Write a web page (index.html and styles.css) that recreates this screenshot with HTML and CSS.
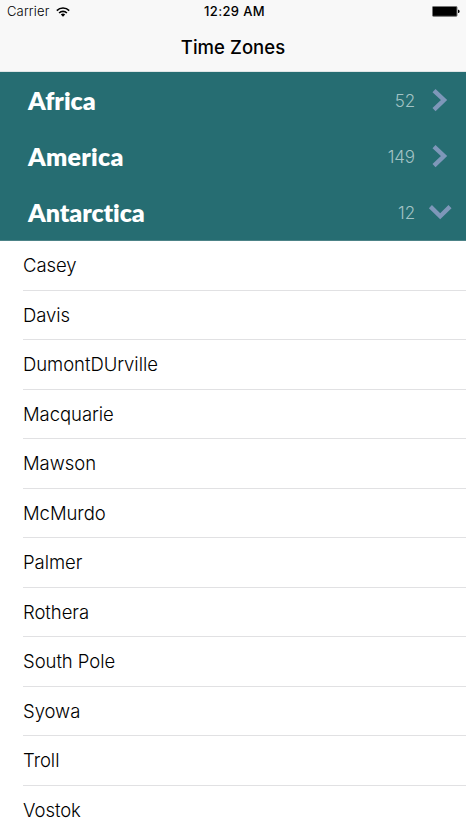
FILE: index.html
```html
<!DOCTYPE html>
<html lang="en">
<head>
<meta charset="utf-8">
<title>Time Zones</title>
<link rel="stylesheet" href="styles.css">
</head>
<body>
<header class="top">
  <div class="status">
    <div class="carrier"><span>Carrier</span>
      <svg class="wifi" width="14" height="10" viewBox="0 0 14 10"><g fill="none" stroke="#000" stroke-width="1.6"><path d="M.8 3.6a8.8 8.8 0 0 1 12.4 0"/><path d="M3.1 6a5.5 5.5 0 0 1 7.8 0"/></g><path d="M4.8 7.5a3.1 3.1 0 0 1 4.4 0L7 9.8z"/></svg>
    </div>
    <time>12:29 AM</time>
    <svg class="battery" width="28" height="11" viewBox="0 0 28 11"><rect x=".5" y=".5" width="24.5" height="9.8" rx=".8" fill="#000" stroke="#777"/><path d="M26 3.7h.5q1.1.4 1.1 1.7t-1.1 1.7H26z"/></svg>
  </div>
  <h1>Time Zones</h1>
</header>
<main>
  <section class="regions">
    <div class="region"><h2>Africa</h2><span class="count">52</span><svg class="chevron" width="22" height="24" viewBox="0 0 22 24"><path d="M5 2.6 15 12 5 21.6"/></svg></div>
    <div class="region"><h2 class="america">America</h2><span class="count">149</span><svg class="chevron" width="22" height="24" viewBox="0 0 22 24"><path d="M5 2.6 15 12 5 21.6"/></svg></div>
    <div class="region"><h2 class="antarctica">Antarctica</h2><span class="count">12</span><svg class="chevron" width="22" height="24" viewBox="0 0 22 24"><path d="M1.4 6.6 11.2 16.2 21 6.6"/></svg></div>
  </section>
  <ul class="zones">
    <li>Casey</li><li>Davis</li><li>DumontDUrville</li><li>Macquarie</li><li>Mawson</li><li>McMurdo</li><li>Palmer</li><li>Rothera</li><li>South Pole</li><li>Syowa</li><li>Troll</li><li>Vostok</li>
  </ul>
</main>
</body>
</html>
```
FILE: styles.css
```css
* { box-sizing: border-box; }
body {
  margin: 0;
  height: 828px;
  overflow: hidden;
  background: #fff;
  color: #000;
  font-family: Inter, sans-serif;
}
.top {
  height: 72px;
  background: #f8f8f8;
  border-bottom: 1px solid #dfe5e6;
}
.status {
  height: 23px;
  padding: 0 6px 0 7px;
  display: grid;
  grid-template-columns: 1fr auto 1fr;
  align-items: center;
  font-size: 13px;
  line-height: 23px;
}
.carrier { display: flex; align-items: center; gap: 6px; font-weight: 350; letter-spacing: .15px; }
.wifi { display: block; }
.status time { padding-left: 2px; font-weight: 500; letter-spacing: .35px; }
.battery { display: block; justify-self: end; }
h1 {
  margin: 0;
  text-align: center;
  font-size: 18.5px;
  font-weight: 550;
  letter-spacing: .05px;
  line-height: 49px;
}
.regions { height: 169px; background: #266d72; border-bottom: 1px solid #4c8387; }
.region {
  height: 56px;
  padding: 0 15px 0 28px;
  display: flex;
  align-items: center;
  color: #fff;
}
h2 {
  flex: 1;
  margin: 0;
  font-family: Lato, sans-serif;
  font-size: 25px;
  font-weight: 800;
  font-variant-ligatures: none;
  line-height: 56px;
}
.america { letter-spacing: .25px; }
.antarctica { letter-spacing: -.05px; }
.count { color: #a3c3c5; font-size: 17px; font-weight: 350; letter-spacing: -.1px; margin: 2px 14px 0 0; }
.chevron { fill: none; stroke: #7e97b9; stroke-width: 4.4; overflow: visible; }
.zones { margin: 0; padding: 0 0 0 23px; list-style: none; }
.zones li {
  height: 49.5px;
  border-bottom: 1px solid #e1e1e3;
  font-size: 18.5px;
  font-weight: 330;
  letter-spacing: -.05px;
  line-height: 49.5px;
}
```
